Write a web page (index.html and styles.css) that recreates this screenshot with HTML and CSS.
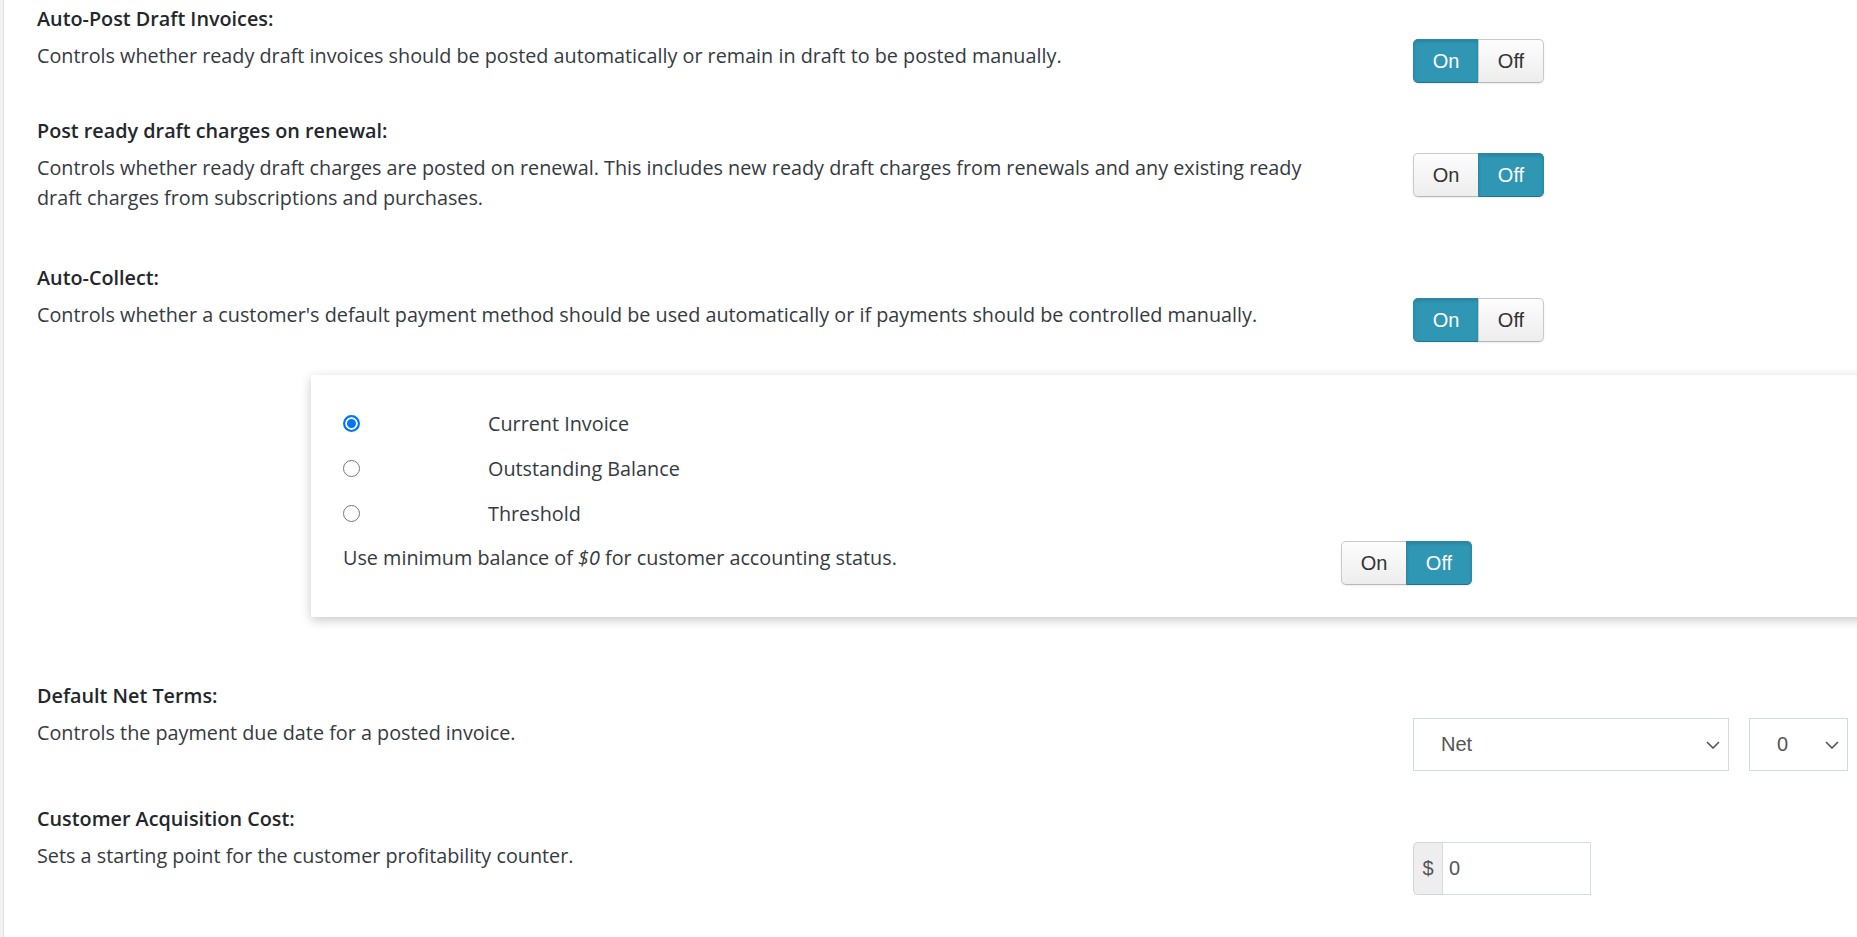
FILE: index.html
```html
<!DOCTYPE html>
<html lang="en">
<head>
<meta charset="utf-8">
<title>Invoice Settings</title>
<link rel="stylesheet" href="styles.css">
</head>
<body>
<div class="page">
  <section class="setting">
    <div class="setting-title">Auto-Post Draft Invoices:</div>
    <div class="setting-row">
      <p class="setting-desc">Controls whether ready draft invoices should be posted automatically or remain in draft to be posted manually.</p>
      <div class="toggle">
        <button class="toggle-btn is-active">On</button><button class="toggle-btn">Off</button>
      </div>
    </div>
  </section>

  <section class="setting setting--loose">
    <div class="setting-title">Post ready draft charges on renewal:</div>
    <div class="setting-row">
      <p class="setting-desc">Controls whether ready draft charges are posted on renewal. This includes new ready draft charges from renewals and any existing ready draft charges from subscriptions and purchases.</p>
      <div class="toggle toggle--low">
        <button class="toggle-btn">On</button><button class="toggle-btn is-active">Off</button>
      </div>
    </div>
  </section>

  <section class="setting">
    <div class="setting-title">Auto-Collect:</div>
    <div class="setting-row">
      <p class="setting-desc">Controls whether a customer's default payment method should be used automatically or if payments should be controlled manually.</p>
      <div class="toggle">
        <button class="toggle-btn is-active">On</button><button class="toggle-btn">Off</button>
      </div>
    </div>
  </section>

  <div class="card">
    <label class="radio-row">
      <input type="radio" name="collect" class="radio" checked>
      <span class="radio-label">Current Invoice</span>
    </label>
    <label class="radio-row">
      <input type="radio" name="collect" class="radio">
      <span class="radio-label">Outstanding Balance</span>
    </label>
    <label class="radio-row">
      <input type="radio" name="collect" class="radio">
      <span class="radio-label">Threshold</span>
    </label>
    <div class="card-row">
      <p class="card-desc">Use minimum balance of <em>$0</em> for customer accounting status.</p>
      <div class="toggle">
        <button class="toggle-btn">On</button><button class="toggle-btn is-active">Off</button>
      </div>
    </div>
  </div>

  <section class="setting">
    <div class="setting-title">Default Net Terms:</div>
    <div class="setting-row">
      <p class="setting-desc">Controls the payment due date for a posted invoice.</p>
      <div class="select-group">
        <div class="select select--wide">
          <span>Net</span>
          <svg class="chevron" width="14" height="8" viewBox="0 0 14 8"><path d="M1 1 L7 7 L13 1" fill="none" stroke="#555" stroke-width="1.6"/></svg>
        </div>
        <div class="select select--narrow">
          <span>0</span>
          <svg class="chevron" width="14" height="8" viewBox="0 0 14 8"><path d="M1 1 L7 7 L13 1" fill="none" stroke="#555" stroke-width="1.6"/></svg>
        </div>
      </div>
    </div>
  </section>

  <section class="setting">
    <div class="setting-title">Customer Acquisition Cost:</div>
    <div class="setting-row">
      <p class="setting-desc">Sets a starting point for the customer profitability counter.</p>
      <div class="input-group">
        <span class="input-addon">$</span>
        <span class="input-field">0</span>
      </div>
    </div>
  </section>
</div>
</body>
</html>
```

FILE: styles.css
```css
html, body {
  margin: 0;
  padding: 0;
}

body {
  background: #f3f3f3;
  font-family: "Open Sans", "Noto Sans", Roboto, sans-serif;
  font-size: 19.8px;
  color: #353a3f;
  overflow: hidden;
}

.page {
  margin-left: 3px;
  border-left: 1px solid #e0e0e0;
  background: #fff;
  min-height: 937px;
  padding: 4px 0 0 33px;
  overflow: hidden;
}

.setting {
  padding-bottom: 33px;
}

.setting--loose {
  padding-bottom: 50px;
}

.setting-title {
  font-weight: 600;
  color: #23272b;
  line-height: 30px;
  margin-bottom: 5px;
}

.setting-row {
  display: flex;
  align-items: flex-start;
}

.setting-desc {
  margin: 2px 0 0;
  width: 1376px;
  padding-right: 80px;
  box-sizing: border-box;
  line-height: 30px;
  flex-shrink: 0;
}

.toggle {
  display: inline-flex;
  border-radius: 5px;
  box-shadow: 0 1px 2px rgba(0, 0, 0, 0.08);
}

.toggle--low {
  margin-top: 2px;
}

.toggle-btn {
  width: 66px;
  height: 44px;
  margin: 0;
  padding: 0;
  font-family: "Liberation Sans", Arial, sans-serif;
  font-size: 20px;
  color: #333;
  background: linear-gradient(#fdfdfd, #ededed);
  border: 1px solid #c9c9c9;
  border-bottom-color: #b8b8b8;
  cursor: pointer;
}

.toggle-btn:first-child {
  border-radius: 5px 0 0 5px;
}

.toggle-btn:last-child {
  border-radius: 0 5px 5px 0;
  margin-left: -1px;
}

.toggle-btn.is-active {
  background: #2f96b4;
  border-color: #2a88a4;
  border-bottom-color: #23748c;
  color: #fff;
  box-shadow: inset 0 2px 3px rgba(0, 0, 0, 0.12);
}

.card {
  margin: 0 -80px 64px 274px;
  background: #fff;
  box-shadow: 0 3px 10px rgba(0, 0, 0, 0.22);
  padding: 26px 0 32px 32px;
}

.radio-row {
  display: grid;
  grid-template-columns: 145px auto;
  align-items: center;
  height: 45px;
}

.radio {
  -webkit-appearance: none;
  appearance: none;
  box-sizing: border-box;
  width: 17px;
  height: 17px;
  margin: 0;
  border: 1px solid #767676;
  border-radius: 50%;
  background: #fff;
}

.radio:checked {
  border: 2px solid #0075ff;
  background: #0075ff;
  box-shadow: inset 0 0 0 2px #fff;
}

.radio-label {
  line-height: 30px;
}

.card-row {
  display: flex;
  align-items: flex-start;
  margin-top: 5px;
}

.card-desc {
  margin: 2px 0 0;
  width: 998px;
  flex-shrink: 0;
  line-height: 30px;
}

.select-group {
  display: flex;
  gap: 20px;
  margin-top: 2px;
}

.select {
  display: flex;
  align-items: center;
  justify-content: space-between;
  box-sizing: border-box;
  height: 53px;
  padding: 0 8px 0 27px;
  border: 1px solid #d2dbe1;
  background: #fff;
  font-family: "Liberation Sans", Arial, sans-serif;
  font-size: 20px;
  color: #555;
}

.select--wide {
  width: 316px;
}

.select--narrow {
  width: 99px;
}

.chevron {
  display: block;
}

.input-group {
  display: flex;
  width: 178px;
  height: 53px;
  margin-top: 3px;
  font-family: "Liberation Sans", Arial, sans-serif;
  font-size: 20px;
  color: #555;
}

.input-addon {
  display: flex;
  align-items: center;
  justify-content: center;
  width: 29px;
  box-sizing: border-box;
  background: #eee;
  border: 1px solid #d0d6db;
  border-right: none;
  border-radius: 5px 0 0 5px;
}

.input-field {
  flex: 1;
  display: flex;
  align-items: center;
  padding-left: 6px;
  border: 1px solid #d5dde3;
  background: #fff;
}
```
